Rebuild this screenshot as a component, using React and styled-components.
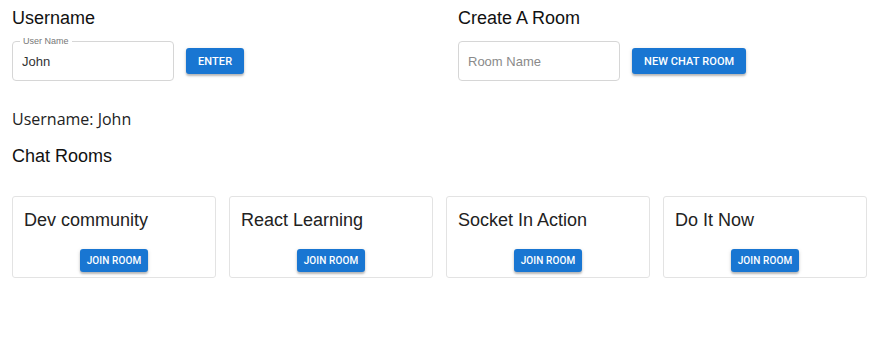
import React, { useState } from "react";
import styled, { createGlobalStyle } from "styled-components";

const GlobalStyle = createGlobalStyle`
  body {
    margin: 0;
    background: #fff;
    font-family: "Liberation Sans", Arial, sans-serif;
    color: #1f1f1f;
  }
`;

const Page = styled.div`
  padding: 6px 12px 0 12px;
`;

const TopRow = styled.div`
  display: grid;
  grid-template-columns: 446px 1fr;
`;

const Section = styled.div`
  display: flex;
  flex-direction: column;
`;

const Heading = styled.h2`
  margin: 0;
  font-size: 18px;
  font-weight: 400;
  line-height: 24px;
  color: #111;
`;

const FormRow = styled.div`
  display: flex;
  align-items: center;
  gap: 12px;
  margin-top: 11px;
`;

const Field = styled.fieldset`
  position: relative;
  margin: 0;
  padding: 0 9px;
  width: 162px;
  height: 40px;
  box-sizing: border-box;
  border: 1px solid #d6d6d6;
  border-radius: 4px;
  display: flex;
  align-items: center;
`;

const Legend = styled.span`
  position: absolute;
  top: -6px;
  left: 7px;
  padding: 0 3px;
  background: #fff;
  font-size: 9px;
  line-height: 10px;
  color: #777;
`;

const Input = styled.input`
  border: none;
  outline: none;
  width: 100%;
  font-family: "Liberation Sans", Arial, sans-serif;
  font-size: 13px;
  color: #333;
  padding: 0;
  &::placeholder {
    color: #8a8a8a;
  }
`;

const Button = styled.button`
  background: #1976d2;
  color: #fff;
  border: none;
  border-radius: 3px;
  font-family: Roboto, "Liberation Sans", sans-serif;
  font-weight: 500;
  text-transform: uppercase;
  letter-spacing: 0.1px;
  font-size: ${(p) => (p.$small ? "10px" : "11px")};
  height: ${(p) => (p.$small ? "23px" : "26px")};
  padding: ${(p) => (p.$small ? "0 7px" : "0 12px")};
  box-shadow: 0 2px 2px rgba(0, 0, 0, 0.22), 0 1px 4px rgba(0, 0, 0, 0.12);
  cursor: pointer;
`;

const Status = styled.div`
  margin-top: 27px;
  font-family: "Open Sans", "Noto Sans", sans-serif;
  font-size: 16px;
  line-height: 22px;
  color: #222;
`;

const SubHeading = styled(Heading)`
  margin-top: 14px;
`;

const Grid = styled.div`
  display: grid;
  grid-template-columns: repeat(4, 204px);
  gap: 13px;
  margin-top: 28px;
`;

const Card = styled.div`
  border: 1px solid #e3e3e3;
  border-radius: 3px;
  height: 82px;
  box-sizing: border-box;
  padding: 11px 11px 0 11px;
  display: flex;
  flex-direction: column;
`;

const CardTitle = styled.div`
  font-size: 18px;
  line-height: 24px;
  color: #222;
`;

const CardActions = styled.div`
  display: flex;
  justify-content: center;
  margin-top: 17px;
`;

const rooms = ["Dev community", "React Learning", "Socket In Action", "Do It Now"];

export default function App() {
  const [name] = useState("John");
  return (
    <>
      <GlobalStyle />
      <Page>
        <TopRow>
          <Section>
            <Heading>Username</Heading>
            <FormRow>
              <Field>
                <Legend>User Name</Legend>
                <Input defaultValue="John" />
              </Field>
              <Button>Enter</Button>
            </FormRow>
          </Section>
          <Section>
            <Heading>Create A Room</Heading>
            <FormRow>
              <Field>
                <Input placeholder="Room Name" />
              </Field>
              <Button>New Chat Room</Button>
            </FormRow>
          </Section>
        </TopRow>
        <Status>Username: {name}</Status>
        <SubHeading>Chat Rooms</SubHeading>
        <Grid>
          {rooms.map((r) => (
            <Card key={r}>
              <CardTitle>{r}</CardTitle>
              <CardActions>
                <Button $small>Join Room</Button>
              </CardActions>
            </Card>
          ))}
        </Grid>
      </Page>
    </>
  );
}
